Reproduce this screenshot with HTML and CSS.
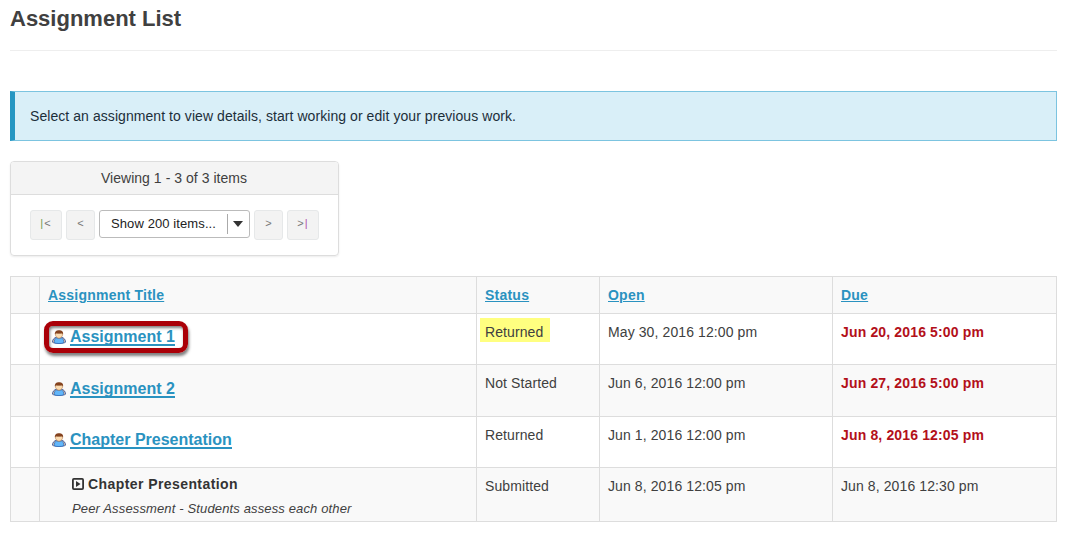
FILE: index.html
```html
<!DOCTYPE html>
<html lang="en">
<head>
<meta charset="utf-8">
<title>Assignment List</title>
<link rel="stylesheet" href="styles.css">
</head>
<body>
<svg class="defs" width="0" height="0">
  <symbol id="person" viewBox="0 0 14 14">
    <path d="M.5 12.2C.4 9.4 2.4 7.6 4.6 7.2h4.8c2.2.4 4.2 2.2 4.1 5-1.7 1.5-11.3 1.5-13 0z" fill="#e6c4a4" stroke="#35549c" stroke-width=".9"/>
    <path d="M2.5 12.8C1.6 10.6 3.2 8.4 4.8 7.8c1.4.9 3 .9 4.4 0 1.6.6 3.2 2.8 2.3 5-1.6 1-7.4 1-9 0z" fill="#62b6fa" stroke="#2d68b5" stroke-width=".7"/>
    <path d="M3.6 3.2h6.8v2.4C10 7.2 8.3 8.2 7 8.2S4 7.2 3.6 5.6z" fill="#fbdcb2" stroke="#b67a45" stroke-width=".6"/>
    <path d="M2.9 4.6C2.5 1.5 4.3.2 7 .2s4.5 1.2 4.1 4.4L10 3.3c-2 .5-4 .3-6 0z" fill="#84431f"/>
  </symbol>
</svg>
<main class="page">
  <h1 class="title">Assignment List</h1>
  <p class="instruction">Select an assignment to view details, start working or edit your previous work.</p>
  <section class="pager">
    <div class="pager-head">Viewing 1 - 3 of 3 items</div>
    <div class="pager-body">
      <button class="nav wide" disabled><span class="bar-first">|</span>&lt;</button>
      <button class="nav" disabled>&lt;</button>
      <div class="select"><span class="select-text">Show 200 items...</span><span class="select-arrow"><svg width="10" height="6" viewBox="0 0 10 6"><path d="M0 0h10L5 6z" fill="#333"/></svg></span></div>
      <button class="nav" disabled>&gt;</button>
      <button class="nav wide" disabled>&gt;<span class="bar-last">|</span></button>
    </div>
  </section>
  <div class="table">
    <div class="row head">
      <div class="cell"></div>
      <div class="cell"><a class="sort">Assignment Title</a></div>
      <div class="cell"><a class="sort">Status</a></div>
      <div class="cell"><a class="sort">Open</a></div>
      <div class="cell"><a class="sort">Due</a></div>
    </div>
    <div class="row">
      <div class="cell"></div>
      <div class="cell name marked"><svg class="person"><use href="#person"/></svg><a class="link">Assignment 1</a></div>
      <div class="cell"><span class="highlight">Returned</span></div>
      <div class="cell">May 30, 2016 12:00 pm</div>
      <div class="cell late">Jun 20, 2016 5:00 pm</div>
    </div>
    <div class="row alt tall">
      <div class="cell"></div>
      <div class="cell name"><svg class="person"><use href="#person"/></svg><a class="link">Assignment 2</a></div>
      <div class="cell">Not Started</div>
      <div class="cell">Jun 6, 2016 12:00 pm</div>
      <div class="cell late">Jun 27, 2016 5:00 pm</div>
    </div>
    <div class="row">
      <div class="cell"></div>
      <div class="cell name"><svg class="person"><use href="#person"/></svg><a class="link">Chapter Presentation</a></div>
      <div class="cell">Returned</div>
      <div class="cell">Jun 1, 2016 12:00 pm</div>
      <div class="cell late">Jun 8, 2016 12:05 pm</div>
    </div>
    <div class="row alt last">
      <div class="cell"></div>
      <div class="cell peer">
        <div class="peer-title"><svg width="12" height="12" viewBox="0 0 12 12"><rect x=".9" y=".9" width="10.2" height="10.2" rx="1" fill="none" stroke="#333" stroke-width="1.8"/><path d="M4 3l4.5 3L4 9z" fill="#333"/></svg><span>Chapter Presentation</span></div>
        <div class="peer-note">Peer Assessment - Students assess each other</div>
      </div>
      <div class="cell">Submitted</div>
      <div class="cell">Jun 8, 2016 12:05 pm</div>
      <div class="cell">Jun 8, 2016 12:30 pm</div>
    </div>
  </div>
</main>
</body>
</html>
```
FILE: styles.css
```css
*, *::after { box-sizing: border-box; }
body {
  margin: 0;
  background: #fff;
  color: #404040;
  font: 14px/18px "Liberation Sans", Arial, sans-serif;
}
.defs { position: absolute; }
.page { width: 1047px; margin-left: 10px; }
.title {
  margin: 0 0 40px;
  height: 51px;
  padding-top: 6px;
  border-bottom: 1px solid #eee;
  font-size: 22px;
  line-height: 26px;
}
.instruction {
  margin: 0 0 20px;
  height: 50px;
  padding: 15px 15px;
  border: 1px solid #7cc4e0;
  border-left: 5px solid #2696c2;
  background: #d9eff8;
  color: #1c2e3a;
  letter-spacing: .065px;
}
.pager {
  width: 329px;
  height: 95px;
  margin-bottom: 20px;
  border: 1px solid #ddd;
  border-radius: 4px;
  box-shadow: 0 1px 2px rgba(0, 0, 0, .08);
  overflow: hidden;
}
.pager-head {
  height: 33px;
  padding-top: 7px;
  padding-right: 1px;
  border-bottom: 1px solid #ddd;
  background: #f4f4f4;
  text-align: center;
  letter-spacing: .04px;
}
.pager-body { display: flex; gap: 4px; padding: 15px 19px; }
.nav {
  width: 29px;
  height: 30px;
  padding: 0 0 4px;
  border: 1px solid #e6e8e9;
  border-radius: 3px;
  background: #f3f3f3;
  color: #777;
  font: 11px "Liberation Sans", Arial, sans-serif;
}
.nav.wide { width: 32px; letter-spacing: 1px; }
.bar-first { color: #6a9a50; }
.bar-last { color: #b050a8; }
.select {
  display: flex;
  align-items: center;
  width: 151px;
  height: 28px;
  border: 1px solid #bbb;
  border-radius: 3px;
  color: #222;
  font-size: 13px;
  letter-spacing: .1px;
}
.select-text { width: 128px; padding-left: 11px; border-right: 1px solid #aaa; line-height: 20px; white-space: nowrap; }
.select-arrow { display: flex; padding-left: 5px; }
.table { border: 1px solid #ddd; border-width: 1px 0 0 1px; }
.row {
  display: grid;
  grid-template-columns: 29px 437px 123px 233px 224px;
  height: 51px;
}
.head { height: 37px; }
.tall { height: 52px; }
.last { height: 54px; }
.head, .alt { background: #f9f9f9; }
.cell {
  padding: 9px 8px 0;
  border: 1px solid #ddd;
  border-width: 0 1px 1px 0;
  white-space: nowrap;
  letter-spacing: .1px;
}
.sort {
  color: #2a92c0;
  font-weight: bold;
  text-decoration: underline;
  letter-spacing: .23px;
}
.late { color: #b3101a; font-weight: bold; letter-spacing: .15px; }
.name { display: flex; position: relative; padding: 14px 0 0 12px; letter-spacing: 0; }
.tall .name { padding-top: 15px; }
.person { width: 14px; height: 14px; margin-top: 2px; }
.link {
  height: 18px;
  margin-left: 4px;
  border-bottom: 2px solid #2a92c0;
  color: #2a92c0;
  font-size: 16px;
  font-weight: bold;
}
.marked::after {
  content: "";
  position: absolute;
  left: 4px;
  top: 7px;
  width: 144px;
  height: 32px;
  border: 5px solid #aa0008;
  border-radius: 9px;
  box-shadow: 1px 3px 3px rgba(0, 0, 0, .5), inset 1px 2px 3px rgba(0, 0, 0, .5);
}
.highlight {
  display: block;
  width: 70px;
  height: 24px;
  margin: -5px 0 0 -5px;
  padding: 5px 0 0 5px;
  background: #ffff80;
}
.peer { padding: 7px 0 0 32px; }
.peer-title { display: flex; align-items: center; gap: 4px; font-weight: bold; color: #333; letter-spacing: .42px; }
.peer-note { margin-top: 7px; font-size: 13px; font-style: italic; letter-spacing: .14px; }
```
